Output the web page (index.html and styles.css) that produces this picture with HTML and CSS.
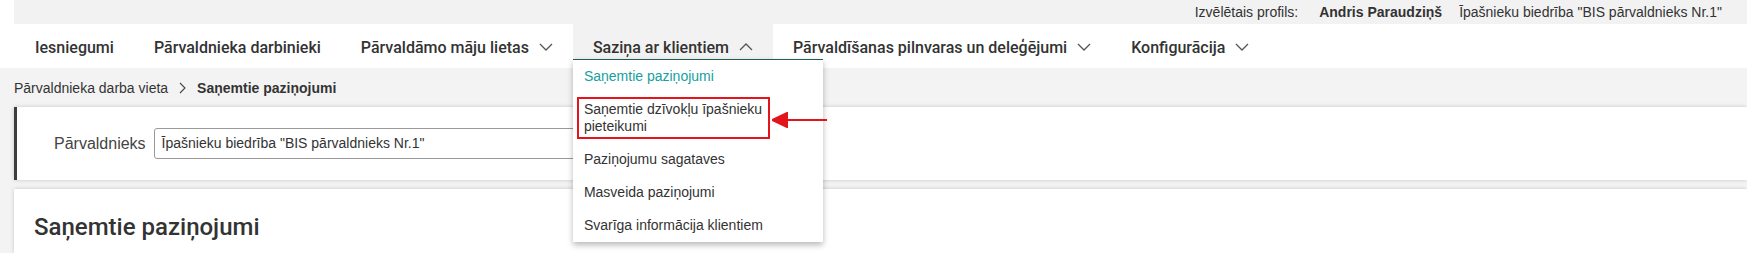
FILE: index.html
```html
<!DOCTYPE html>
<html lang="lv">
<head>
    <meta charset="UTF-8">
    <meta name="viewport" content="width=device-width, initial-scale=1.0">
    <title>Saņemtie paziņojumi</title>
    <link rel="stylesheet" href="styles.css">
</head>
<body>
<header class="header">
    <div class="topbar">
        <span>Izvēlētais profils:</span>
        <span class="profile-name">Andris Paraudziņš</span>
        <span>Īpašnieku biedrība "BIS pārvaldnieks Nr.1"</span>
    </div>
    <nav class="nav">
        <div class="nav-item">Iesniegumi</div>
        <div class="nav-item">Pārvaldnieka darbinieki</div>
        <div class="nav-item">Pārvaldāmo māju lietas
            <svg class="chevron" width="14" height="8" viewBox="0 0 14 8"><polyline points="1,1 7,7 13,1"/></svg>
        </div>
        <div class="nav-item active">Saziņa ar klientiem
            <svg class="chevron" width="14" height="8" viewBox="0 0 14 8"><polyline points="1,7 7,1 13,7"/></svg>
            <div class="dropdown">
                <div class="dropdown-item current">Saņemtie paziņojumi</div>
                <div class="dropdown-item marked">
                    <span class="mark-box">Saņemtie dzīvokļu īpašnieku pieteikumi</span>
                    <!-- annotation arrow -->
                    <svg class="mark-arrow" width="56" height="16" viewBox="0 0 56 16">
                        <line x1="14" y1="8" x2="55" y2="8"/>
                        <polygon points="0,8 15,1 15,15"/>
                    </svg>
                </div>
                <div class="dropdown-item">Paziņojumu sagataves</div>
                <div class="dropdown-item">Masveida paziņojumi</div>
                <div class="dropdown-item">Svarīga informācija klientiem</div>
            </div>
        </div>
        <div class="nav-item">Pārvaldīšanas pilnvaras un deleģējumi
            <svg class="chevron" width="14" height="8" viewBox="0 0 14 8"><polyline points="1,1 7,7 13,1"/></svg>
        </div>
        <div class="nav-item">Konfigurācija
            <svg class="chevron" width="14" height="8" viewBox="0 0 14 8"><polyline points="1,1 7,7 13,1"/></svg>
        </div>
    </nav>
</header>

<div class="breadcrumb">
    <span>Pārvaldnieka darba vieta</span>
    <svg class="crumb-sep" width="7" height="12" viewBox="0 0 7 12"><polyline points="1,1 6,6 1,11"/></svg>
    <b>Saņemtie paziņojumi</b>
</div>

<section class="panel filter">
    <label class="filter-label">Pārvaldnieks</label>
    <div class="select">Īpašnieku biedrība "BIS pārvaldnieks Nr.1"</div>
</section>

<section class="panel content">
    <h1>Saņemtie paziņojumi</h1>
</section>
</body>
</html>
```

FILE: styles.css
```css
body {
    margin: 0;
    background: #f3f3f3;
    font-family: "Liberation Sans", Arial, sans-serif;
    font-size: 14px;
    color: #333;
}
.header {
    background: #fff;
    padding-left: 14px;
}
.topbar {
    display: flex;
    justify-content: flex-end;
    height: 24px;
    line-height: 24px;
    padding-right: 25px;
    background: #f2f2f2;
}
.profile-name {
    font-weight: bold;
    margin: 0 17px 0 21px;
}
.nav {
    display: flex;
    height: 44px;
    padding-left: 1px;
    background: #fff;
    font-family: Roboto, "Liberation Sans", sans-serif;
    font-weight: 500;
    font-size: 16px;
}
.nav-item {
    position: relative;
    display: flex;
    align-items: center;
    padding: 2px 20px 0;
    white-space: nowrap;
}
.nav-item.active {
    background: #f2f2f2;
}
.chevron {
    margin-left: 10px;
    fill: none;
    stroke: #555;
    stroke-width: 1.3;
}
.dropdown {
    position: absolute;
    top: 35px;
    left: 0;
    width: 250px;
    z-index: 10;
    background: #fff;
    border-top: 1px solid #1f5c58;
    box-shadow: 0 3px 6px rgba(0, 0, 0, 0.28);
    font-family: "Liberation Sans", Arial, sans-serif;
    font-weight: normal;
    font-size: 14px;
    line-height: 17px;
    white-space: normal;
}
.dropdown-item {
    padding: 8px 11px;
    color: #333;
}
.dropdown-item.current {
    color: #17a0a0;
}
.dropdown-item.marked {
    position: relative;
    padding: 4px 4px;
}
.mark-box {
    display: block;
    width: 179px;
    padding: 2px 5px;
    border: 2px solid #e3141c;
}
.mark-arrow {
    position: absolute;
    left: 199px;
    top: 19px;
    fill: #e3141c;
    stroke: #e3141c;
    stroke-width: 2;
}
.breadcrumb {
    display: flex;
    align-items: center;
    padding: 12px 14px 11px;
    line-height: 16px;
}
.crumb-sep {
    margin: 0 11px 0 11px;
    fill: none;
    stroke: #444;
    stroke-width: 1.1;
}
.panel {
    margin-left: 14px;
    background: #fff;
    box-shadow: 0 0 4px rgba(0, 0, 0, 0.18);
}
.filter {
    display: flex;
    align-items: center;
    height: 73px;
    padding-left: 37px;
    border-left: 3px solid #3d3d3d;
    box-sizing: border-box;
}
.filter-label {
    font-size: 16px;
    color: #444;
    margin-right: 8px;
}
.select {
    width: 560px;
    height: 31px;
    line-height: 29px;
    padding-left: 7px;
    border: 1px solid #999;
    border-radius: 3px;
    box-sizing: border-box;
}
.content {
    margin-top: 9px;
    padding: 24px 20px 12px;
}
.content h1 {
    margin: 0;
    font-family: Roboto, "Liberation Sans", sans-serif;
    font-weight: 500;
    font-size: 24px;
    line-height: 28px;
    color: #333;
}
```
